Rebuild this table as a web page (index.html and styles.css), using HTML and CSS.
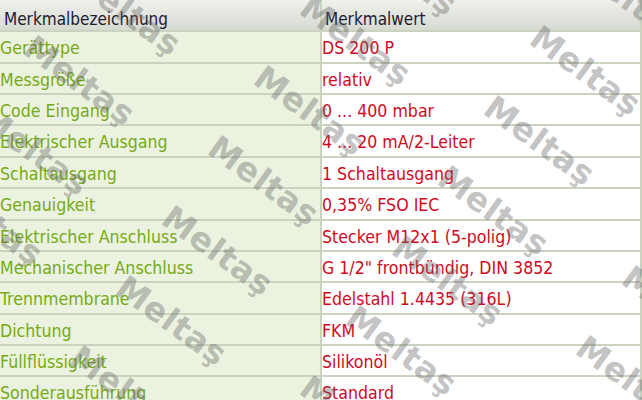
FILE: index.html
```html
<!DOCTYPE html>
<html lang="de">
<head>
    <meta charset="UTF-8">
    <meta name="viewport" content="width=device-width, initial-scale=1.0">
    <title>Technische Daten DS 200 P</title>
    <link rel="stylesheet" href="styles.css">
</head>
<body>
    <div class="sheet">
        <div class="specs">
            <div class="cell head name-col">Merkmalbezeichnung</div>
            <div class="cell head">Merkmalwert</div>

            <div class="cell name">Gerättype</div>
            <div class="cell value">DS 200 P</div>

            <div class="cell name">Messgröße</div>
            <div class="cell value">relativ</div>

            <div class="cell name">Code Eingang</div>
            <div class="cell value">0 ... 400 mbar</div>

            <div class="cell name">Elektrischer Ausgang</div>
            <div class="cell value">4 ... 20 mA/2-Leiter</div>

            <div class="cell name">Schaltausgang</div>
            <div class="cell value">1 Schaltausgang</div>

            <div class="cell name">Genauigkeit</div>
            <div class="cell value">0,35% FSO IEC</div>

            <div class="cell name">Elektrischer Anschluss</div>
            <div class="cell value">Stecker M12x1 (5-polig)</div>

            <div class="cell name">Mechanischer Anschluss</div>
            <div class="cell value">G 1/2" frontbündig, DIN 3852</div>

            <div class="cell name">Trennmembrane</div>
            <div class="cell value">Edelstahl 1.4435 (316L)</div>

            <div class="cell name">Dichtung</div>
            <div class="cell value">FKM</div>

            <div class="cell name">Füllflüssigkeit</div>
            <div class="cell value">Silikonöl</div>

            <div class="cell name">Sonderausführung</div>
            <div class="cell value">Standard</div>
        </div>

        <div class="watermarks" id="watermarks"></div>
    </div>

    <script>
        // Wasserzeichen als schräges Raster über die Tabelle legen
        var layer = document.getElementById('watermarks');
        for (var i = -2; i <= 3; i++) {
            for (var j = -4; j <= 6; j++) {
                var x = 222 + i * 230 - j * 46;
                var y = 130 + i * 30 + j * 70;
                if (x < -170 || x > 650 || y < -150 || y > 410) continue;
                var mark = document.createElement('span');
                mark.className = 'mark';
                mark.textContent = 'Meltaş';
                mark.style.left = x + 'px';
                mark.style.top = y + 'px';
                layer.appendChild(mark);
            }
        }
    </script>
</body>
</html>
```

FILE: styles.css
```css
body { margin: 0; background: #fff; overflow: hidden; }
.sheet { position: relative; width: 642px; height: 400px; overflow: hidden; }

.specs { display: grid; width: 640px; grid-template-columns: 322px 1fr; grid-template-rows: 32.4px; grid-auto-rows: 31.36px; font-family: "DejaVu Sans Condensed", "DejaVu Sans", sans-serif; font-stretch: condensed; border-right: 2px solid #c9d3bf; }
.cell { box-sizing: border-box; border-bottom: 2px solid #c9d3bf; white-space: nowrap; overflow: hidden; line-height: 20px; }

.head { font-size: 17px; color: #1a1a36; padding: 9px 0 0 3px; background: linear-gradient(#eff1ec, #d6dad0); }
.head.name-col { padding-left: 4px; border-right: 2px solid #c9d3bf; }

.name { font-size: 17.6px; color: #76aa14; background: #ebf3e0; padding: 6px 0 0 0; border-right: 2px solid #c9d3bf; }
.value { font-size: 17.6px; color: #cf0a1e; background: #fff; padding: 6px 0 0 0; }

.watermarks { position: absolute; left: 0; top: 0; right: 0; bottom: 0; pointer-events: none; }
.mark { position: absolute; font-family: "DejaVu Sans", sans-serif; font-weight: bold; font-size: 33px; line-height: 1; letter-spacing: 0.5px; white-space: nowrap; color: rgba(100, 100, 100, 0.39); transform: rotate(36deg); transform-origin: 0 0; }
```
